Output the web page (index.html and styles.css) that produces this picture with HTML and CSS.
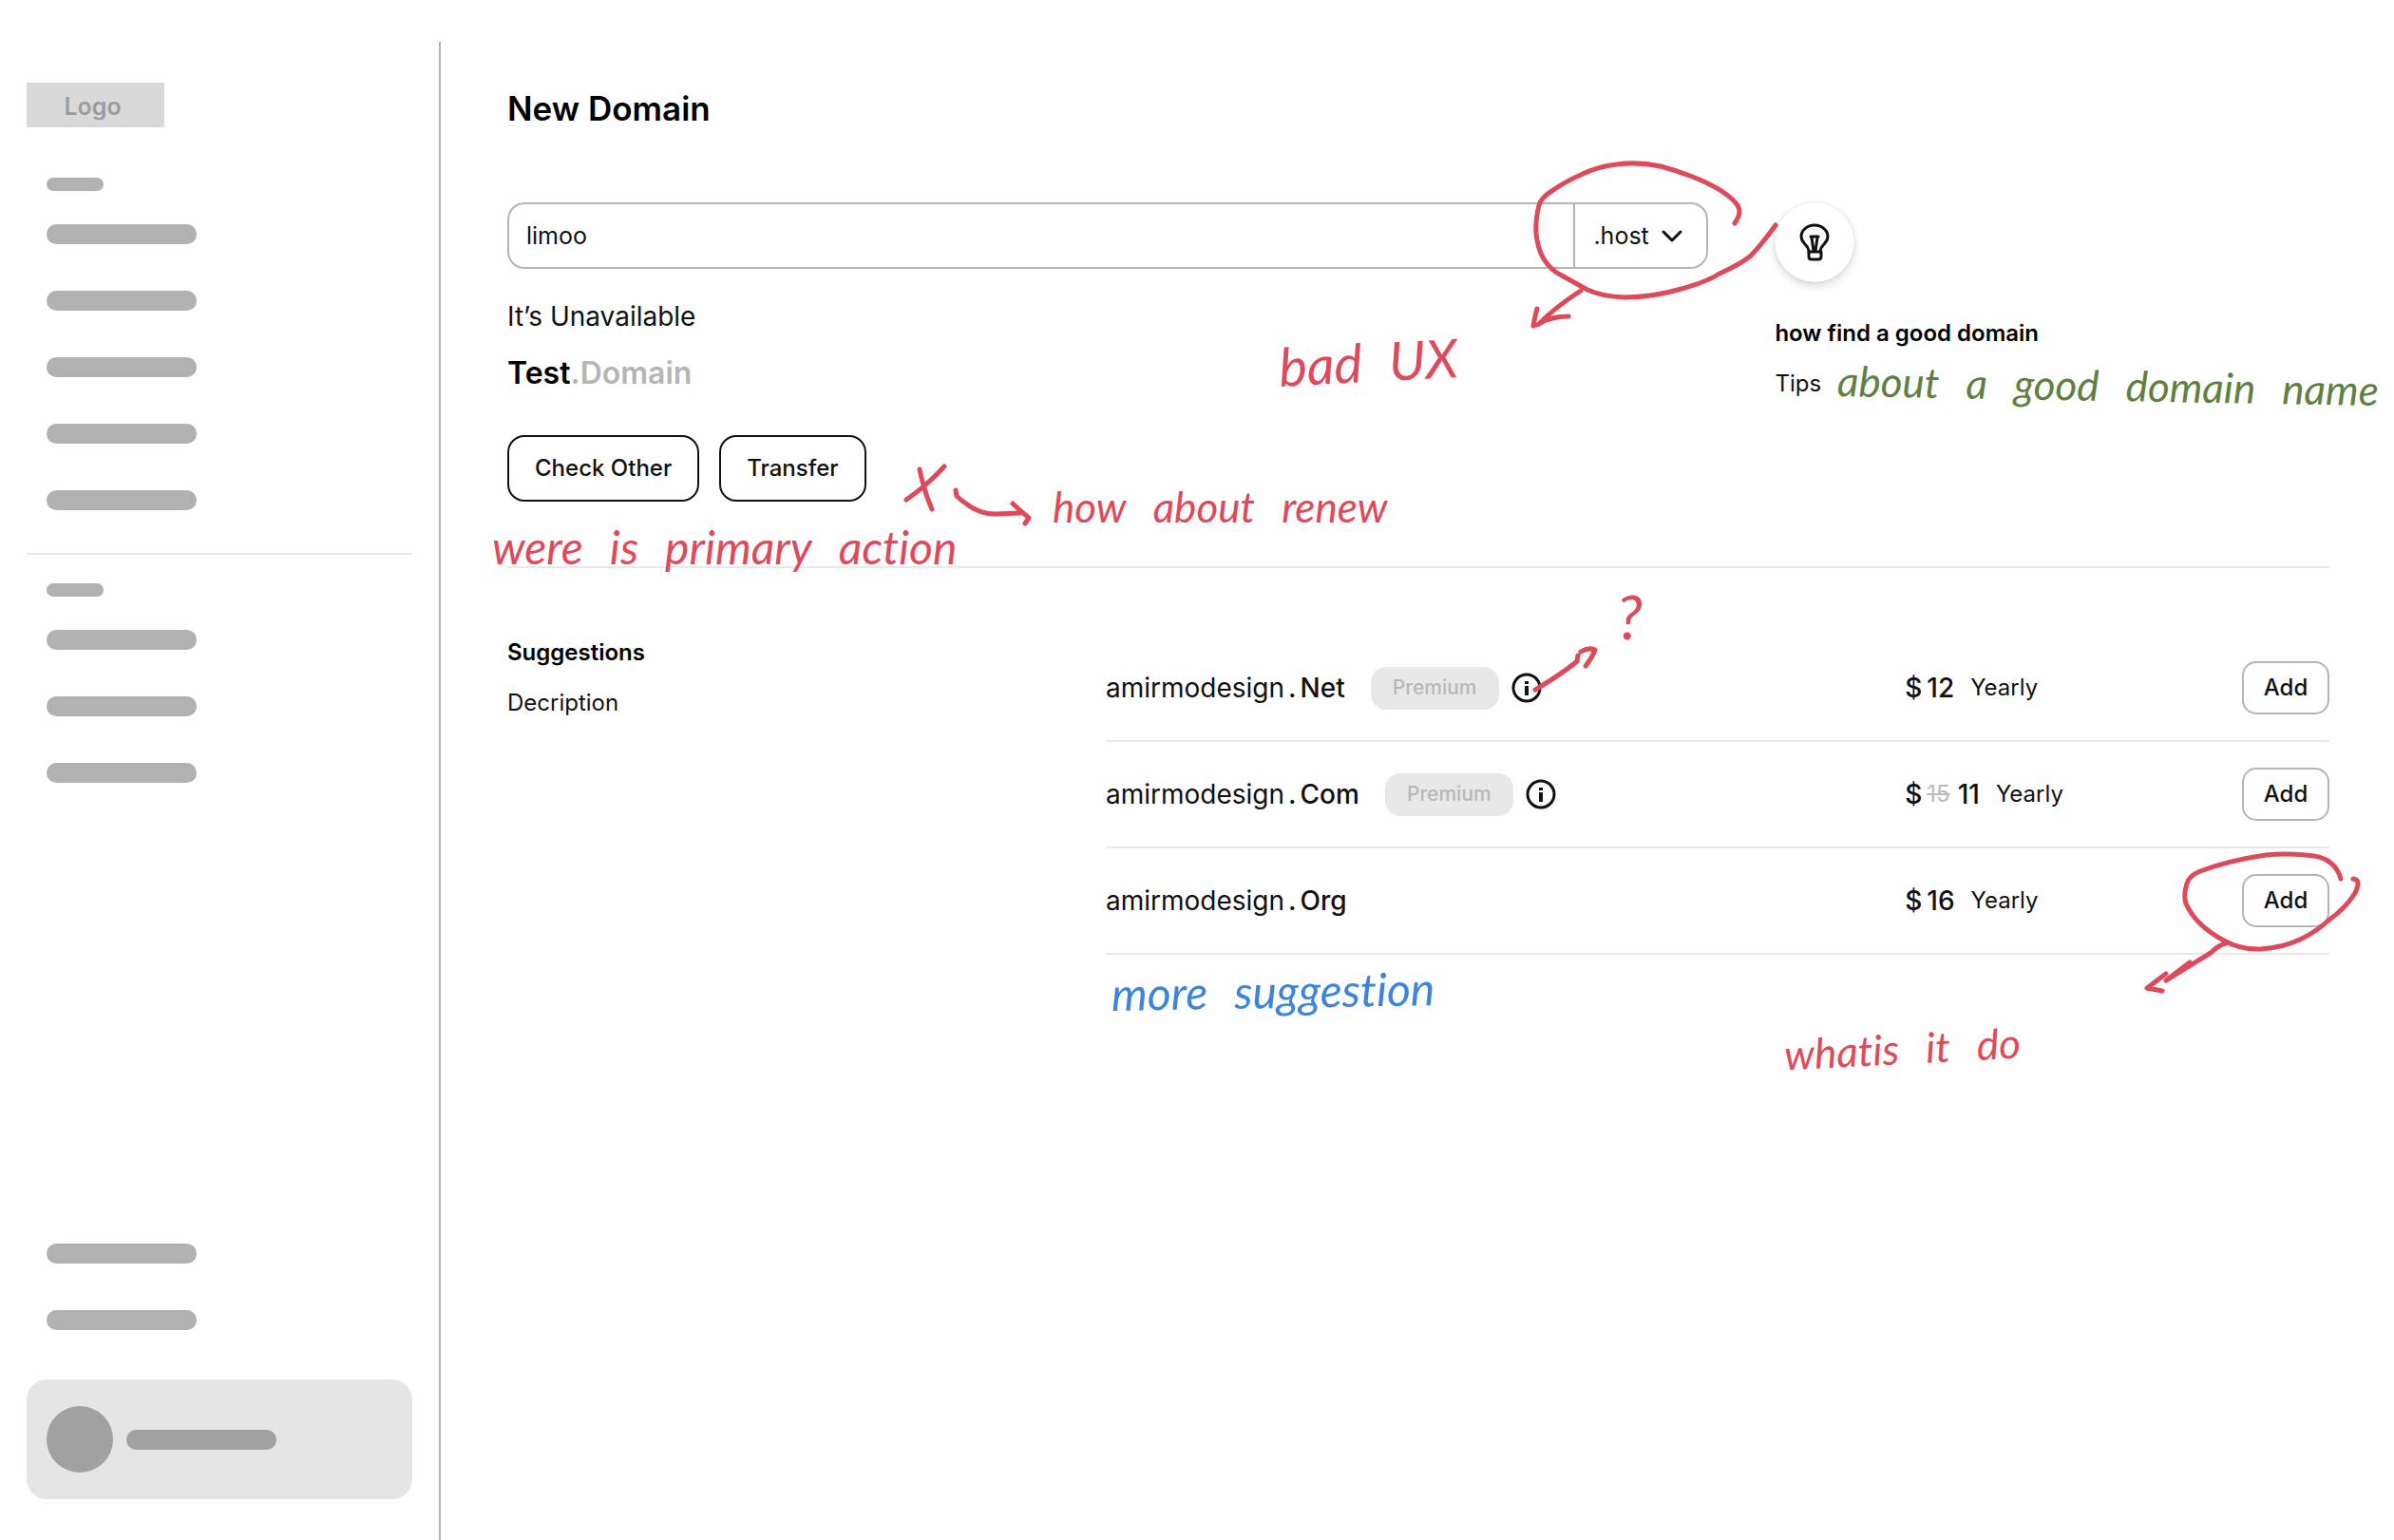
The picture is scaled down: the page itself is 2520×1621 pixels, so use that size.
FILE: index.html
```html
<!DOCTYPE html>
<html lang="en">
<head>
    <meta charset="UTF-8">
    <meta name="viewport" content="width=device-width, initial-scale=1.0">
    <title>New Domain</title>
    <link rel="stylesheet" href="styles.css">
</head>
<body>
    <div class="app">
        <aside class="sidebar">
            <div class="logo">Logo</div>
            <div class="menu">
                <div class="bar short"></div>
                <div class="bar"></div>
                <div class="bar"></div>
                <div class="bar"></div>
                <div class="bar"></div>
                <div class="bar"></div>
            </div>
            <div class="menu second">
                <div class="bar short"></div>
                <div class="bar"></div>
                <div class="bar"></div>
                <div class="bar"></div>
            </div>
            <div class="menu bottom">
                <div class="bar"></div>
                <div class="bar"></div>
            </div>
            <div class="user">
                <div class="avatar"></div>
                <div class="bar"></div>
            </div>
        </aside>

        <main class="main">
            <h1>New Domain</h1>

            <section class="top">
                <div class="check">
                    <div class="search">
                        <input type="text" value="limoo" aria-label="Domain name">
                        <div class="ext">
                            <select aria-label="Extension">
                                <option>.host</option>
                                <option>.com</option>
                                <option>.net</option>
                            </select>
                            <svg class="chevron" width="22" height="14" viewBox="0 0 22 14"><path d="M2 2 L11 11 L20 2"/></svg>
                            <svg class="mark mark-ext" width="270" height="185" viewBox="0 0 270 185">
                                <path d="M216 69 Q224 58 219 50 C206 32 168 17 138 9 Q114 4 92 7 Q72 9 54 18 Q38 25 25 34 Q12 42 10 50 Q6 66 7 80 Q9 98 16 108 Q22 118 34 124 L61 139 Q76 146 100 147 Q130 147 160 138 Q186 131 200 122 Q222 112 232 104 Q244 92 259 71"/>
                                <path d="M54 140 Q26 158 10 175 M8 159 Q5 170 4 177 L10 175 Q22 167 41 167"/>
                            </svg>
                        </div>
                        <p class="note note-ux"><span>bad</span> <span>UX</span></p>
                    </div>
                    <p class="status">It’s Unavailable</p>
                    <p class="name">Test<span>.Domain</span></p>
                    <div class="actions">
                        <button class="button">Check Other</button>
                        <button class="button">Transfer</button>
                        <svg class="mark mark-cross" width="140" height="72" viewBox="0 0 140 72">
                            <path d="M46 7 Q28 27 6 42 M20 10 Q25 34 33 52"/>
                            <path d="M58 32 L59 38 Q80 58 101 57 L126 56 M118 46 Q126 54 135 61 L131 67"/>
                        </svg>
                        <p class="note note-renew"><span>how</span> <span>about</span> <span>renew</span></p>
                        <p class="note note-primary"><span>were</span> <span>is</span> <span>primary</span> <span>action</span></p>
                    </div>
                </div>
                <div class="tips">
                    <div class="bulb">
                        <svg width="32" height="42" viewBox="0 0 32 42">
                            <path d="M10 31 Q10 27 6 23 Q2 19 2 15 A14 12 0 0 1 30 15 Q30 19 26 23 Q22 27 22 31"/>
                            <path d="M10 31 H23 V36 Q23 39 20 39 H13 Q10 39 10 36 Z"/>
                            <path d="M12 15 H20 M13 16 L15 30 M19 16 L17 30"/>
                        </svg>
                    </div>
                    <h2>how find a good domain</h2>
                    <p>Tips</p>
                    <p class="note note-tips"><span>about</span> <span>a</span> <span>good</span> <span>domain</span> <span>name</span></p>
                </div>
            </section>

            <section class="suggestions">
                <div>
                    <h2>Suggestions</h2>
                    <p>Decription</p>
                </div>
                <div class="list">
                    <table>
                        <tr>
                            <td class="col-name">
                                <div class="cell">
                                    <span class="domain">amirmodesign<b>.</b><b>Net</b></span>
                                    <span class="badge">Premium</span>
                                    <button class="info" aria-label="Info">
                                        <svg width="32" height="32" viewBox="0 0 32 32"><circle cx="16" cy="16" r="14"/><path class="letter" d="M16 14 V24 M16 9 V12"/></svg>
                                        <svg class="mark mark-info" width="76" height="54" viewBox="0 0 76 54"><path d="M6 48 Q36 30 50 18 L51 12 M54 8 Q62 3 69 6 Q66 14 59 23"/></svg>
                                    </button>
                                </div>
                            </td>
                            <td class="col-price"><div class="cell price"><b>$</b><b>12</b><span>Yearly</span></div></td>
                            <td class="col-add"><button class="add">Add</button></td>
                        </tr>
                        <tr>
                            <td>
                                <div class="cell">
                                    <span class="domain">amirmodesign<b>.</b><b>Com</b></span>
                                    <span class="badge">Premium</span>
                                    <button class="info" aria-label="Info">
                                        <svg width="32" height="32" viewBox="0 0 32 32"><circle cx="16" cy="16" r="14"/><path class="letter" d="M16 14 V24 M16 9 V12"/></svg>
                                    </button>
                                </div>
                            </td>
                            <td class="col-price"><div class="cell price"><b>$</b><s>15</s><b>11</b><span>Yearly</span></div></td>
                            <td><button class="add">Add</button></td>
                        </tr>
                        <tr>
                            <td>
                                <div class="cell">
                                    <span class="domain">amirmodesign<b>.</b><b>Org</b></span>
                                </div>
                            </td>
                            <td class="col-price"><div class="cell price"><b>$</b><b>16</b><span>Yearly</span></div></td>
                            <td>
                                <button class="add">Add
                                    <svg class="mark mark-add" width="234" height="156" viewBox="0 0 234 156">
                                        <path d="M209 31 Q206 20 198 14 Q190 7 172 6 Q150 4 130 6 Q90 12 61 23 Q49 28 47 36 Q43 48 46 57 Q56 80 86 96 Q104 106 125 105 Q150 103 168 94 Q184 86 197 74 Q214 62 224 46 Q231 32 222 31"/>
                                        <path d="M88 99 Q80 101 72 109 L25 138 L50 119 M25 131 L5 146 L21 149"/>
                                    </svg>
                                </button>
                            </td>
                        </tr>
                    </table>
                    <p class="note note-question">?</p>
                    <p class="note note-more"><span>more</span> <span>suggestion</span></p>
                    <p class="note note-what"><span>whatis</span> <span>it</span> <span>do</span></p>
                </div>
            </section>
        </main>
    </div>
</body>
</html>
```
FILE: styles.css
```css
* {
    box-sizing: border-box;
}
body {
    font-family: Inter, sans-serif;
    font-size: 24px;
    line-height: 36px;
    background: #fefefe;
    color: #111;
    margin: 0;
}
h1, h2, p {
    margin: 0;
}
button, input, select {
    font: inherit;
    color: inherit;
    background: none;
    border: none;
    padding: 0;
    margin: 0;
}
button, select {
    cursor: pointer;
}
.app {
    display: grid;
    grid-template-columns: 464px 1fr;
    min-height: 100vh;
    padding-top: 44px;
}

/* sidebar */
.sidebar {
    display: flex;
    flex-direction: column;
    padding: 43px 28px;
    border-right: 2px solid #b5b5b5;
}
.logo {
    width: 145px;
    padding: 7px 6px 4px 0;
    margin-bottom: 53px;
    background: #d9d9d9;
    color: #9c9c9c;
    font-size: 25px;
    font-weight: 600;
    text-align: center;
}
.menu {
    display: flex;
    flex-direction: column;
    gap: 49px;
    padding-left: 21px;
}
.bar {
    width: 158px;
    height: 21px;
    border-radius: 11px;
    background: #b1b1b1;
}
.bar.short {
    width: 60px;
    height: 14px;
    margin-bottom: -14px;
}
.menu.second {
    margin-top: 45px;
    padding-top: 30px;
    border-top: 2px solid #ebe8e8;
}
.menu.bottom {
    margin-top: auto;
    margin-bottom: 52px;
}
.user {
    display: flex;
    align-items: center;
    gap: 14px;
    padding: 28px 21px;
    border-radius: 21px;
    background: #e5e5e5;
}
.user .bar {
    background: #a1a1a1;
}
.avatar {
    width: 70px;
    height: 70px;
    border-radius: 50%;
    background: #a1a1a1;
}

/* content */
.main {
    padding: 49px 68px 0 70px;
}
h1 {
    font-size: 35px;
    line-height: 42px;
    font-weight: 600;
    color: #000;
    margin-bottom: 78px;
}
h2 {
    font-size: 24px;
    line-height: 36px;
    font-weight: 600;
    color: #000;
    margin-bottom: 17px;
}
.top {
    display: grid;
    grid-template-columns: 13fr 6fr;
    gap: 70px;
    padding-bottom: 68px;
    border-bottom: 2px solid #e9e9e9;
}
.search {
    position: relative;
    display: flex;
    height: 70px;
    border: 2px solid #b5b5b5;
    border-radius: 18px;
    margin-bottom: 32px;
    font-size: 25px;
}
.search input {
    flex: 1;
    min-width: 0;
    padding: 0 18px;
    outline: none;
}
.ext {
    position: relative;
    width: 140px;
    border-left: 2px solid #b5b5b5;
}
.ext select {
    appearance: none;
    width: 100%;
    height: 100%;
    padding-left: 19px;
    outline: none;
}
.chevron {
    position: absolute;
    right: 25px;
    top: 27px;
    pointer-events: none;
}
.status {
    font-size: 28px;
    line-height: 36px;
    margin-bottom: 21px;
}
.name {
    font-size: 32px;
    line-height: 42px;
    font-weight: 600;
    color: #000;
    margin-bottom: 44px;
}
.name span {
    color: #b5b5b5;
}
.actions {
    position: relative;
    display: flex;
    gap: 21px;
}
.button {
    height: 70px;
    padding: 0 27px;
    border: 2px solid #111;
    border-radius: 18px;
    font-weight: 500;
}
.tips {
    position: relative;
}
.bulb {
    display: flex;
    align-items: center;
    justify-content: center;
    width: 84px;
    height: 84px;
    margin-bottom: 36px;
    border-radius: 50%;
    box-shadow: 0 4px 8px rgba(0, 0, 0, 0.14), 0 0 2px rgba(0, 0, 0, 0.14);
}

/* suggestions */
.suggestions {
    display: grid;
    grid-template-columns: 10fr 23fr;
    gap: 70px;
    padding-top: 71px;
}
.list {
    position: relative;
}
table {
    width: 100%;
    table-layout: fixed;
    border-collapse: separate;
    border-spacing: 0;
}
td {
    height: 112px;
    padding: 0;
    border-bottom: 2px solid #e9e9e9;
    text-align: right;
}
.col-name {
    width: 65%;
}
.col-price {
    padding-left: 4px;
}
.col-add {
    width: 92px;
}
.cell {
    display: flex;
    align-items: center;
}
.cell b {
    font-size: 28px;
    font-weight: 500;
}
.domain {
    display: flex;
    gap: 4px;
    font-size: 28px;
    margin-right: 27px;
}
.badge {
    padding: 4px 23px 5px;
    margin-right: 13px;
    border-radius: 16px;
    background: #e8e8e8;
    color: #b8b8b8;
    font-size: 21px;
    font-weight: 500;
}
.info {
    position: relative;
    display: flex;
}
.price {
    gap: 5px;
}
.price span {
    margin-left: 12px;
}
.price s {
    color: #bbb;
    margin-right: 3px;
}
.add {
    position: relative;
    width: 92px;
    height: 56px;
    border: 2px solid #b5b5b5;
    border-radius: 15px;
    font-weight: 500;
}

/* icons */
svg {
    fill: none;
    stroke: #111;
    stroke-width: 3;
    stroke-linecap: round;
    stroke-linejoin: round;
}
.letter {
    stroke-width: 4;
    stroke-linecap: butt;
}

/* pen notes */
.mark {
    position: absolute;
    overflow: visible;
    stroke: #df4a5a;
    stroke-width: 5;
    pointer-events: none;
}
.mark-ext {
    left: -48px;
    top: -49px;
}
.mark-cross {
    left: 414px;
    top: 26px;
}
.mark-info {
    left: 19px;
    top: -30px;
}
.mark-add {
    left: -107px;
    top: -28px;
}
.note {
    position: absolute;
    display: flex;
    gap: 28px;
    font-family: Lato, sans-serif;
    font-style: italic;
    font-size: 44px;
    line-height: 52px;
    font-variant-ligatures: none;
    color: #df4a5a;
    white-space: nowrap;
}
.note-ux {
    left: 810px;
    top: 140px;
    font-size: 56px;
    rotate: -3deg;
}
.note-renew {
    left: 574px;
    top: 49px;
}
.note-primary {
    left: -16px;
    top: 92px;
    font-size: 48px;
}
.note-tips {
    left: 66px;
    top: 166px;
    color: #5f8040;
    rotate: 1deg;
}
.note-question {
    left: 538px;
    top: -46px;
    font-size: 64px;
}
.note-more {
    left: 6px;
    bottom: -64px;
    font-size: 48px;
    color: #3c84dd;
    rotate: -1deg;
}
.note-what {
    left: 714px;
    bottom: -124px;
    rotate: -3deg;
}
```
